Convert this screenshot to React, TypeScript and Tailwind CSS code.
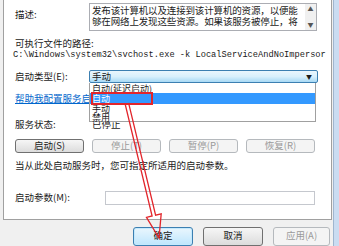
const cjk = "font-['Noto_Sans_CJK_SC','Noto_Sans',sans-serif]";

const listItems = [
  { label: "自动(延迟启动)", h: "h-[10px]" },
  { label: "自动", h: "h-[11px]", active: true },
  { label: "手动", h: "h-[9px]" },
  { label: "禁用", h: "h-[9px]" },
];

const serviceButtons = [
  { label: "启动(S)", disabled: false },
  { label: "停止(T)", disabled: true },
  { label: "暂停(P)", disabled: true },
  { label: "恢复(R)", disabled: true },
];

function WinButton({ label, disabled, wide }: { label: string; disabled?: boolean; wide?: string }) {
  return (
    <div
      className={`flex h-full items-center justify-center rounded-[3px] border text-[9.5px] leading-none ${wide ?? "w-[69px]"} ${
        disabled
          ? "border-[#b5b9bd] bg-[#f4f4f4] text-[#9a9a9a]"
          : "border-[#707070] bg-gradient-to-b from-[#f6f6f6] to-[#dcdcdc] text-[#1a1a1a]"
      }`}
    >
      {label}
    </div>
  );
}

function RedArrow() {
  return (
    <svg className="pointer-events-none absolute left-0 top-0" width="339" height="246" viewBox="0 0 339 246">
      <polygon
        points="128.75,103.6 155.6,215.2 161.2,213.8 159,238 146.5,217.4 152.1,216 125.25,104.4"
        fill="none"
        stroke="#e2252b"
        strokeWidth="1.3"
        strokeLinejoin="miter"
      />
    </svg>
  );
}

export default function App() {
  return (
    <div className={`relative flex h-[246px] w-[339px] overflow-hidden bg-[#f0f0f0] text-[#1a1a1a] ${cjk}`}>
      <div className="flex w-[333px] flex-col">
        {/* property page panel */}
        <div className="relative ml-[3px] flex h-[226px] w-[329px] flex-col border-x border-b border-[#a0a0a0] bg-white pl-[11px]">
          {/* description */}
          <div className="flex h-[31px] items-start">
            <span className="mt-[9px] w-[74px] text-[9.5px] leading-[11px]">描述:</span>
            <div className="mt-[3px] flex h-[28px] w-[228px] border border-[#abadb3] bg-white">
              <div className="flex-1 overflow-hidden whitespace-nowrap pl-[2px] pt-[1px] text-[9.5px] leading-[11px] tracking-[-0.15px]">
                <div>发布该计算机以及连接到该计算机的资源，以便能</div>
                <div>够在网络上发现这些资源。如果该服务被停止，将</div>
              </div>
              <div className="flex w-[11px] flex-col items-center justify-between bg-[#f0f0f0] py-[2px] text-[6px] leading-none text-[#555]">
                <span>▲</span>
                <span>▼</span>
              </div>
            </div>
          </div>

          <div className="mt-[7px] h-[11px] text-[9.5px] leading-[11px]">可执行文件的路径:</div>
          <div className="-ml-[2px] mt-[1px] h-[11px] whitespace-nowrap font-['Liberation_Mono',monospace] text-[8.7px] leading-[11px]">
            C:\Windows\system32\svchost.exe -k LocalServiceAndNoImpersor
          </div>

          {/* startup type */}
          <div className="mt-[9px] flex h-[13px] items-center">
            <span className="w-[74px] text-[9.5px] leading-none">启动类型(E):</span>
            <div className="flex h-full w-[229px] items-center justify-between rounded-[2px] border border-[#3c7fb1] bg-gradient-to-b from-[#eaf6fd] via-[#d9f0fc] to-[#a7d9f5] pl-[2px] pr-[5px]">
              <span className="text-[9.5px] leading-none">手动</span>
              <span className="text-[6px] leading-none text-[#1a1a1a]">▼</span>
            </div>
          </div>

          <div className="mt-[10px] h-[11px] whitespace-nowrap text-[9.5px] leading-[11px] text-[#0066cc] underline">
            帮助我配置服务启动选项。
          </div>

          <div className="mt-[15px] flex h-[11px] items-center text-[9.5px] leading-none">
            <span className="w-[77px]">服务状态:</span>
            <span>已停止</span>
          </div>

          <div className="mt-[9px] flex h-[14px] gap-[8px]">
            {serviceButtons.map((b) => (
              <WinButton key={b.label} label={b.label} disabled={b.disabled} />
            ))}
          </div>

          <div className="mt-[7px] h-[11px] whitespace-nowrap text-[9.5px] leading-[11px]">
            当从此处启动服务时，您可指定所适用的启动参数。
          </div>

          <div className="mt-[20px] flex h-[14px] items-center">
            <span className="w-[90px] text-[9.5px] leading-none">启动参数(M):</span>
            <div className="h-full w-[210px] border border-[#c5c8ce] bg-white" />
          </div>

          {/* open dropdown list */}
          <div className="absolute left-[85px] top-[83px] h-[39px] w-[227px] border border-t-0 border-[#a0a0a0] bg-white">
            {listItems.map((item) => (
              <div
                key={item.label}
                className={`flex ${item.h} items-center pl-[2px] text-[9px] leading-none ${
                  item.active ? "bg-[#3399ff] text-white" : "text-[#1a1a1a]"
                }`}
              >
                {item.label}
              </div>
            ))}
            <div className="absolute left-[1px] top-[9px] h-[13px] w-[62px] border-2 border-[#e2252b]" />
          </div>
        </div>

        {/* dialog buttons */}
        <div className="mt-[7px] flex h-[20px] gap-[10px] pl-[133px]">
          <div className="flex h-full w-[60px] items-start justify-center rounded-[3px] border border-[#3c7fb1] bg-gradient-to-b from-[#eaf6fd] to-[#bee6fd] pt-[3px] text-[9.5px] leading-none shadow-[inset_0_0_0_1px_#c4e9fd]">
            确定
          </div>
          <div className="flex h-full w-[60px] items-start justify-center rounded-[3px] border border-[#707070] bg-gradient-to-b from-[#f6f6f6] to-[#dcdcdc] pt-[3px] text-[9.5px] leading-none">
            取消
          </div>
          <div className="flex h-full w-[57px] items-start justify-center rounded-[3px] border border-[#b5b9bd] bg-[#f4f4f4] pt-[3px] text-[9.5px] leading-none text-[#9a9a9a]">
            应用(A)
          </div>
        </div>
      </div>

      {/* window frame edge */}
      <div className="h-full w-[6px] border-l border-[#9fb6cf] bg-[#cadcf1]" />

      <RedArrow />
    </div>
  );
}
